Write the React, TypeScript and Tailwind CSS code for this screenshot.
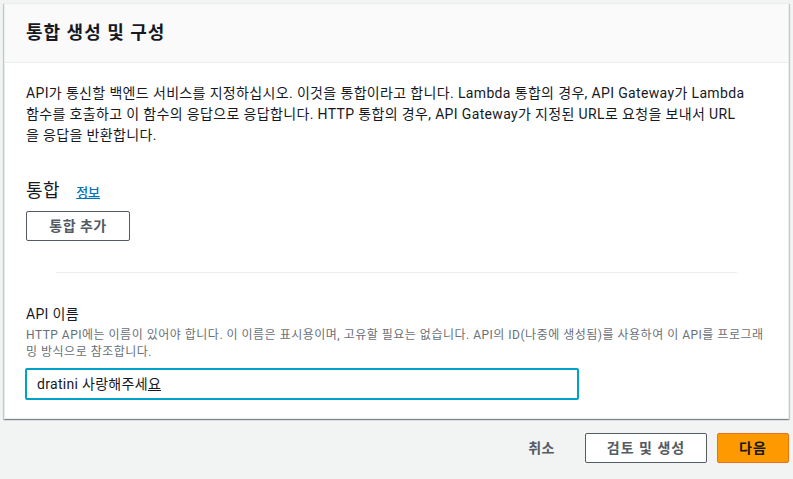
import React from "react";

export default function App() {
  const font = { fontFamily: '"Roboto", "Noto Sans CJK KR", sans-serif' };
  return (
    <div className="w-[793px] h-[479px] bg-[#f2f3f3] overflow-hidden text-[#16191f]" style={font}>
      <div className="pt-[3px] pl-[4px] pr-[4px]">
        <div className="bg-white border border-[#eaeded] shadow-[0_1px_1px_0_rgba(0,28,36,0.3),1px_1px_1px_0_rgba(0,28,36,0.15),-1px_1px_1px_0_rgba(0,28,36,0.15)]">
          <div className="h-[59px] bg-[#fafafa] border-b border-[#eaeded] flex items-center px-[21px]">
            <h2 className="text-[18px] font-bold leading-[22px] tracking-[1px]">통합 생성 및 구성</h2>
          </div>
          <div className="px-[21px] pt-[20px] pb-[18px]">
            <p className="text-[14px] leading-[21px] tracking-[0.35px] whitespace-nowrap">
              API가 통신할 백엔드 서비스를 지정하십시오. 이것을 통합이라고 합니다. Lambda 통합의 경우, API Gateway가 Lambda
              <br />
              함수를 호출하고 이 함수의 응답으로 응답합니다. HTTP 통합의 경우, API Gateway가 지정된 URL로 요청을 보내서 URL
              <br />을 응답을 반환합니다.
            </p>
            <div className="mt-[33px] flex items-baseline gap-[16px]">
              <span className="text-[18px] leading-[24px] tracking-[0.5px]">통합</span>
              <a className="text-[13px] text-[#0073bb] underline font-medium">정보</a>
            </div>
            <button className="mt-[8px] h-[30px] w-[104px] border border-[#545b64] rounded-[2px] text-[14px] font-bold text-[#545b64] bg-white tracking-[0.5px]">
              통합 추가
            </button>
            <div className="mt-[31px] mx-[30px] h-px bg-[#eaeded]" />
            <div className="mt-[31px] text-[14px] leading-[20px] tracking-[0.3px]">API 이름</div>
            <div className="mt-[3px] text-[12px] leading-[17px] text-[#687078] tracking-[0.5px]">
              HTTP API에는 이름이 있어야 합니다. 이 이름은 표시용이며, 고유할 필요는 없습니다. API의 ID(나중에 생성됨)를 사용하여 이 API를 프로그래밍 방식으로 참조합니다.
            </div>
            <div className="mt-[7px] w-[554px] h-[32px] border-2 border-[#00a1c9] rounded-[2px] flex items-center px-[10px] text-[14px] -ml-[1px] tracking-[0.3px]">
              dratini 사랑해주세<span className="underline">요</span>
            </div>
          </div>
        </div>
      </div>
      <div className="flex justify-end items-center mt-[14px] pr-[4px]">
        <button className="text-[14px] font-bold text-[#545b64] mr-[30px] tracking-[0.5px]">취소</button>
        <button className="h-[30px] w-[122px] border border-[#545b64] rounded-[2px] bg-white text-[14px] font-bold text-[#545b64] tracking-[1px] mr-[10px]">
          검토 및 생성
        </button>
        <button className="h-[30px] w-[72px] border border-[#ec7211] rounded-[2px] bg-[#ff9900] text-[14px] font-bold text-[#16191f] tracking-[1px]">
          다음
        </button>
      </div>
    </div>
  );
}
